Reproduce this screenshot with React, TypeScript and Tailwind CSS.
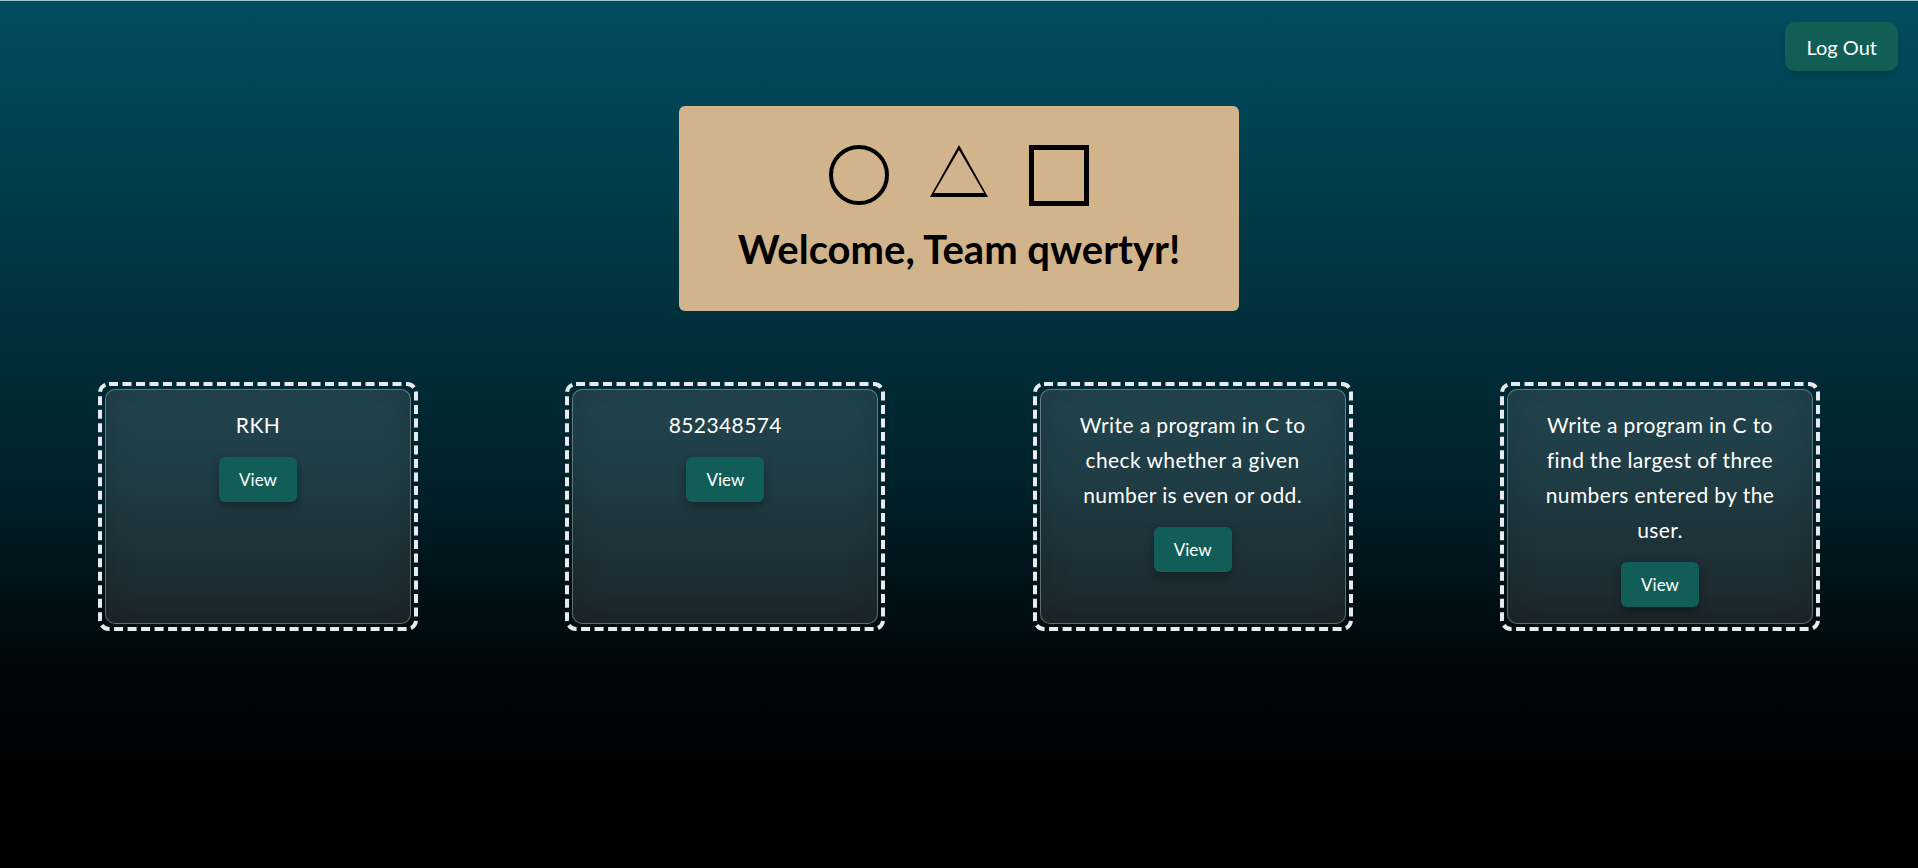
import { ReactNode } from 'react';

const questions = [
  'RKH',
  '852348574',
  'Write a program in C to check whether a given number is even or odd.',
  'Write a program in C to find the largest of three numbers entered by the user.',
];

const Shapes = () => (
  <div className="flex items-start justify-center gap-[41px]">
    <div className="w-[60px] h-[60px] rounded-full border-[4px] border-black" />
    <svg width="58" height="52" viewBox="0 0 58 52">
      <polygon points="29,0 0,52 58,52" fill="#000" />
      <polygon points="29,5 4,48 54,48" fill="#d2b48c" />
    </svg>
    <div className="w-[60px] h-[61px] border-[5px] border-black" />
  </div>
);

// dashed frame drawn as svg so the dash length matches
const DashFrame = () => (
  <svg className="absolute inset-0 pointer-events-none" width="320" height="249">
    <rect
      x="2"
      y="2"
      width="316"
      height="245"
      rx="9"
      fill="none"
      stroke="#e8eaee"
      strokeWidth="4"
      strokeDasharray="9 4.5"
    />
  </svg>
);

const Card = ({ children }: { children: ReactNode }) => (
  <div className="relative w-[320px] h-[249px] p-[7px]">
    <DashFrame />
    <div className="h-full rounded-[10px] border border-white/30 bg-gradient-to-b from-white/[0.13] to-white/[0.11] shadow-[inset_0_0_30px_rgba(0,0,0,0.15)] px-6 pt-[17px] flex flex-col items-center text-center">
      {children}
    </div>
  </div>
);

export default function App() {
  return (
    <div
      className="min-h-screen border-t border-[#9cc6ce] bg-gradient-to-b from-[#014d60] via-[#00222b] via-55% to-black"
      style={{ fontFamily: 'Lato, "Noto Sans", sans-serif' }}
    >
      <div className="flex justify-end pt-[21px] pr-5">
        <button className="h-[49px] px-[21px] rounded-[10px] bg-[#115e55] text-white text-[20px] shadow-md">
          Log Out
        </button>
      </div>

      <div className="mx-auto mt-[35px] w-[560px] h-[205px] rounded-md bg-[#d2b48c] pt-[39px] flex flex-col items-center">
        <Shapes />
        <h1 className="mt-[19px] text-[40px] leading-[48px] font-bold text-black">
          Welcome, Team qwertyr!
        </h1>
      </div>

      <div className="mt-[71px] px-[98px] flex justify-between">
        {questions.map((q, i) => (
          <Card key={i}>
            <p className="text-white text-[21px] leading-[35px] tracking-[0.4px]">{q}</p>
            <button className="mt-[15px] h-[45px] px-[20px] rounded-md bg-[#115e59] text-white text-[17px] shadow-[0_4px_10px_rgba(0,0,0,0.35)]">
              View
            </button>
          </Card>
        ))}
      </div>
    </div>
  );
}
